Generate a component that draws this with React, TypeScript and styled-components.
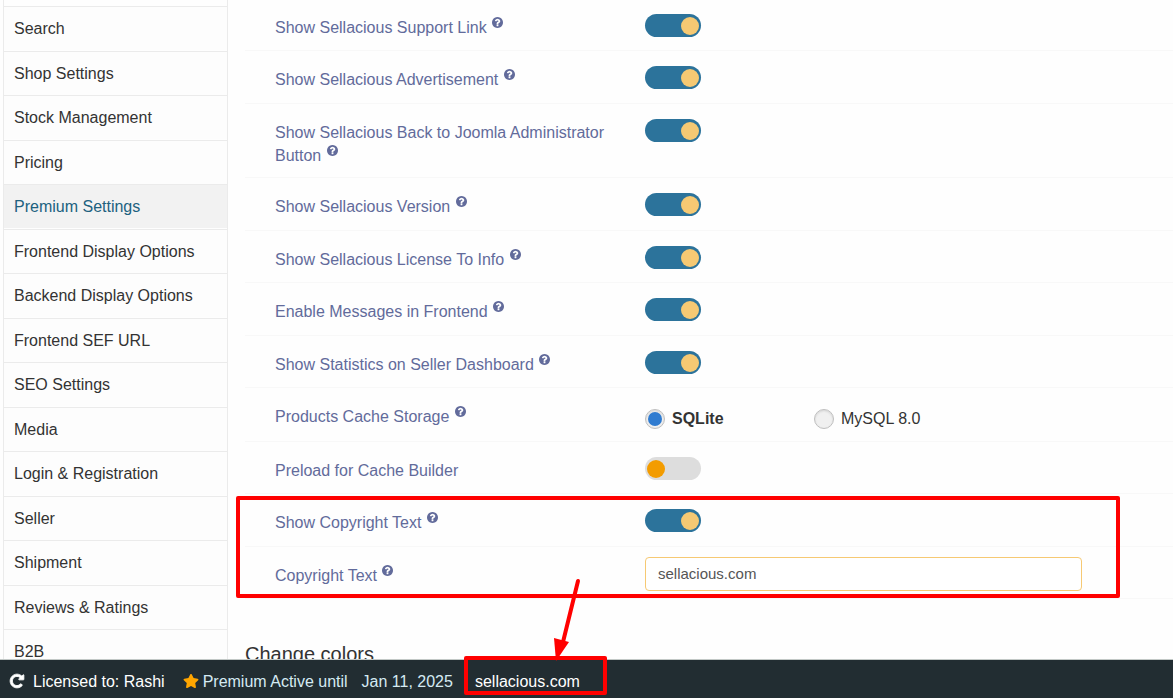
import React, { useState } from "react";
import styled, { createGlobalStyle, css } from "styled-components";
import { FaStar } from "react-icons/fa";

const GlobalStyle = createGlobalStyle`
  *, *::before, *::after { box-sizing: border-box; }
  body {
    margin: 0;
    background: #fefefe;
    color: #333;
    font-family: "Liberation Sans", Arial, sans-serif;
    font-size: 16px;
    line-height: 23px;
  }
`;

const Page = styled.div`
  position: relative;
  display: flex;
  flex-direction: column;
  height: 100vh;
  overflow: hidden;
`;

const Body = styled.div`
  flex: 1;
  min-height: 0;
  display: flex;
  align-items: flex-start;
  overflow: hidden;
`;

const Sidebar = styled.nav`
  flex: none;
  width: 225px;
  margin-left: 3px;
  padding-top: 6px;
  border: solid #ebebeb;
  border-width: 0 1px;
`;

const TabList = styled.ul`
  list-style: none;
  margin: 0;
  padding: 0;
`;

const TabItem = styled.li`
  height: 44px;
  border-top: 1px solid #ebebeb;
  &:nth-child(odd) {
    height: 45px;
  }
`;

const TabLink = styled.a<{ $active: boolean }>`
  display: block;
  height: 43px;
  padding: 10px;
  color: ${(p) => (p.$active ? "#20617f" : "#333")};
  background: ${(p) => (p.$active ? "#f2f2f2" : "#fdfdfd")};
  text-decoration: none;
`;

const Main = styled.main`
  flex: 1;
  min-width: 0;
  margin-left: 17px;
`;

const Rows = styled.div`
  margin-top: -1px;
`;

const Row = styled.div`
  display: grid;
  grid-template-columns: 370px minmax(0, 1fr);
  align-items: start;
  min-height: 52px;
  padding: 10px 91px 7px 30px;
  border-bottom: 1px solid #f8f8f8;
  &:nth-child(even) {
    min-height: 53px;
  }
`;

const RowLabel = styled.label`
  padding: 7px 30px 3px 0;
  color: #626b9b;
`;

const HelpSvg = styled.svg`
  width: 11px;
  height: 11px;
  margin-left: 1px;
  vertical-align: 5px;
  fill: currentColor;
`;

const Toggle = styled.input`
  appearance: none;
  display: flex;
  align-items: center;
  width: 56px;
  height: 23px;
  margin: 5px 0 0;
  padding: 0 2px;
  border-radius: 12px;
  background: #ddd;
  &::before {
    content: "";
    width: 18px;
    height: 18px;
    border-radius: 50%;
    background: #f39c00;
  }
  &:checked {
    justify-content: flex-end;
    background: #2c739b;
  }
  &:checked::before {
    background: #f6c973;
  }
`;

const RadioGroup = styled.div`
  display: flex;
  padding: 9px 0 4px;
`;

const RadioLabel = styled.label<{ $checked: boolean }>`
  display: flex;
  align-items: center;
  gap: 7px;
  width: 169px;
  font-weight: ${(p) => (p.$checked ? "bold" : "normal")};
`;

const Radio = styled.input`
  appearance: none;
  display: grid;
  place-items: center;
  flex: none;
  width: 20px;
  height: 20px;
  margin: 0;
  border: 1px solid #bfbfbf;
  border-radius: 50%;
  background: #f0f0f0;
  box-shadow: inset 0 1px 2px #d4d4d4;
  &:checked::before {
    content: "";
    width: 14px;
    height: 14px;
    border-radius: 50%;
    background: #2f7bd0;
  }
`;

const TextInput = styled.input`
  width: 100%;
  height: 34px;
  padding: 0 12px 2px;
  border: 1px solid #f6c973;
  border-radius: 4px;
  background: #fff;
  color: #555;
  font: 15px "Liberation Sans", Arial, sans-serif;
  outline: none;
`;

const SectionTitle = styled.h2`
  margin: 42px 0 0;
  color: #333;
  font-size: 20px;
  font-weight: normal;
  line-height: 26px;
`;

const StatusBar = styled.footer`
  flex: none;
  display: flex;
  align-items: center;
  height: 39px;
  padding: 4px 9px 0;
  border-top: 1px solid #c2c8c6;
  background: #222d32;
  color: #d5eaf2;
  white-space: nowrap;
`;

const RefreshButton = styled.button`
  display: flex;
  margin-right: 8px;
  padding: 0;
  border: 0;
  background: none;
  color: #fff;
`;

const Licensee = styled.span`
  margin-right: 18px;
  color: #fff;
`;

const Star = styled(FaStar)`
  margin-right: 4px;
  color: #ffa500;
`;

const Expiry = styled.span`
  margin-left: 14px;
`;

const Copyright = styled.span`
  margin-left: 22px;
  color: #fff;
`;

const mark = css`
  position: absolute;
  pointer-events: none;
`;

const FieldsMark = styled.div`
  ${mark}
  left: 236px;
  right: 53px;
  top: 496px;
  height: 102px;
  border: 4px solid #f00;
  border-radius: 2px;
`;

const FooterMark = styled.div`
  ${mark}
  left: 464px;
  bottom: 3px;
  width: 143px;
  height: 39px;
  border: 4px solid #f00;
  border-radius: 2px;
`;

const ArrowMark = styled.svg`
  ${mark}
  left: 550px;
  bottom: 36px;
  width: 34px;
  height: 86px;
`;

const HelpIcon = () => (
  <HelpSvg viewBox="128 128 1536 1536" aria-hidden="true">
    <path d="M1024 1376v-192q0-14-9-23t-23-9h-192q-14 0-23 9t-9 23v192q0 14 9 23t23 9h192q14 0 23-9t9-23zm256-672q0-88-55.5-163t-138.5-116-170-41q-243 0-371 213-15 24 8 42l132 100q7 6 19 6 16 0 25-12 53-68 86-92 34-24 86-24 48 0 85.5 26t37.5 59q0 38-20 61t-68 45q-63 28-115.5 86.5t-52.5 125.5v36q0 14 9 23t23 9h192q14 0 23-9t9-23q0-19 21.5-49.5t54.5-49.5q32-18 49-28.5t46-35 44.5-48 28-60.5 12.5-81zm384 192q0 209-103 385.5t-279.5 279.5-385.5 103-385.5-103-279.5-279.5-103-385.5 103-385.5 279.5-279.5 385.5-103 385.5 103 279.5 279.5 103 385.5z" />
  </HelpSvg>
);

const RefreshIcon = () => (
  <svg width="16" height="16" viewBox="0 0 1792 1792" fill="currentColor" stroke="currentColor" strokeWidth="100">
    <path d="M1664 256v448q0 26-19 45t-45 19h-448q-42 0-59-40-17-39 14-69l138-138q-148-137-349-137-104 0-198.5 40.5t-163.5 109.5-109.5 163.5-40.5 198.5 40.5 198.5 109.5 163.5 163.5 109.5 198.5 40.5q119 0 225-52t179-147q7-10 23-12 15 0 25 9l137 138q9 8 9.5 20.5t-7.5 22.5q-109 132-264 204.5t-327 72.5q-156 0-298-61t-245-164-164-245-61-298 61-298 164-245 245-164 298-61q147 0 284.5 55.5t244.5 156.5l130-129q29-31 70-14 39 17 39 59z" />
  </svg>
);

const tabs = [
  "Search",
  "Shop Settings",
  "Stock Management",
  "Pricing",
  "Premium Settings",
  "Frontend Display Options",
  "Backend Display Options",
  "Frontend SEF URL",
  "SEO Settings",
  "Media",
  "Login & Registration",
  "Seller",
  "Shipment",
  "Reviews & Ratings",
  "B2B",
];

const displayOptions = [
  { id: "support", label: "Show Sellacious Support Link" },
  { id: "advert", label: "Show Sellacious Advertisement" },
  { id: "joomla", label: "Show Sellacious Back to Joomla Administrator Button" },
  { id: "version", label: "Show Sellacious Version" },
  { id: "license", label: "Show Sellacious License To Info" },
  { id: "messages", label: "Enable Messages in Frontend" },
  { id: "statistics", label: "Show Statistics on Seller Dashboard" },
];

function ToggleRow({ id, label, on = true, help = true }: { id: string; label: string; on?: boolean; help?: boolean }) {
  return (
    <Row>
      <RowLabel htmlFor={id}>
        {label} {help && <HelpIcon />}
      </RowLabel>
      <Toggle id={id} type="checkbox" role="switch" defaultChecked={on} />
    </Row>
  );
}

export default function App() {
  const [storage, setStorage] = useState("SQLite");
  const [copyright, setCopyright] = useState("sellacious.com");

  return (
    <Page>
      <GlobalStyle />
      <Body>
        <Sidebar>
          <TabList>
            {tabs.map((tab) => (
              <TabItem key={tab}>
                <TabLink href="#" $active={tab === "Premium Settings"}>
                  {tab}
                </TabLink>
              </TabItem>
            ))}
          </TabList>
        </Sidebar>
        <Main>
          <Rows>
            {displayOptions.map((option) => (
              <ToggleRow key={option.id} {...option} />
            ))}
            <Row role="radiogroup" aria-labelledby="storage-label">
              <RowLabel as="span" id="storage-label">
                Products Cache Storage <HelpIcon />
              </RowLabel>
              <RadioGroup>
                {["SQLite", "MySQL 8.0"].map((name) => (
                  <RadioLabel key={name} $checked={storage === name}>
                    <Radio
                      type="radio"
                      name="storage"
                      checked={storage === name}
                      onChange={() => setStorage(name)}
                    />
                    {name}
                  </RadioLabel>
                ))}
              </RadioGroup>
            </Row>
            <ToggleRow id="preload" label="Preload for Cache Builder" on={false} help={false} />
            <ToggleRow id="show-copyright" label="Show Copyright Text" />
            <Row>
              <RowLabel htmlFor="copyright">
                Copyright Text <HelpIcon />
              </RowLabel>
              <TextInput
                id="copyright"
                type="text"
                value={copyright}
                onChange={(e) => setCopyright(e.target.value)}
              />
            </Row>
          </Rows>
          <SectionTitle>Change colors</SectionTitle>
        </Main>
      </Body>
      <StatusBar>
        <RefreshButton type="button" aria-label="Refresh license">
          <RefreshIcon />
        </RefreshButton>
        <Licensee>Licensed to: Rashi</Licensee>
        <Star size={16} />
        <span>Premium Active until</span>
        <Expiry>Jan 11, 2025</Expiry>
        <Copyright>{copyright}</Copyright>
      </StatusBar>
      <FieldsMark />
      <FooterMark />
      <ArrowMark viewBox="0 0 34 86" aria-hidden="true">
        <path d="M28 5 13 66" stroke="#f00" strokeWidth="4" strokeLinecap="round" />
        <path d="M4 62 19 66 6 85z" fill="#f00" />
      </ArrowMark>
    </Page>
  );
}
